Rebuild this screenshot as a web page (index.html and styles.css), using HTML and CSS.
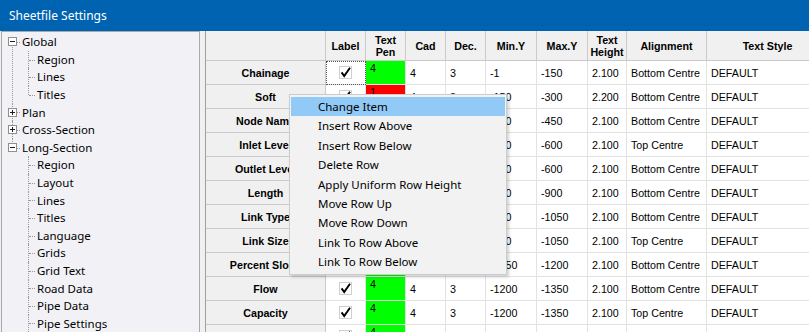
FILE: index.html
```html
<!DOCTYPE html>
<html lang="en">
<head>
    <meta charset="UTF-8">
    <title>Sheetfile Settings</title>
    <link rel="stylesheet" href="styles.css">
</head>
<body>
    <div class="titlebar">Sheetfile Settings</div>
    <div class="window-body">
        <div class="tree-pane">
            <ul class="tree">
                <li class="root first">
                    <div class="node"><svg class="box" width="9" height="9"><rect x=".5" y=".5" width="8" height="8" fill="#fff" stroke="#8e8f8f"/><path d="M2 4.5h5" stroke="#1c1c1c"/></svg>Global</div>
                    <ul class="kids">
                        <li><div class="node">Region</div></li>
                        <li><div class="node">Lines</div></li>
                        <li class="last"><div class="node">Titles</div></li>
                    </ul>
                </li>
                <li class="root">
                    <div class="node"><svg class="box" width="9" height="9"><rect x=".5" y=".5" width="8" height="8" fill="#fff" stroke="#8e8f8f"/><path d="M2 4.5h5M4.5 2v5" stroke="#1c1c1c"/></svg>Plan</div>
                </li>
                <li class="root">
                    <div class="node"><svg class="box" width="9" height="9"><rect x=".5" y=".5" width="8" height="8" fill="#fff" stroke="#8e8f8f"/><path d="M2 4.5h5M4.5 2v5" stroke="#1c1c1c"/></svg>Cross-Section</div>
                </li>
                <li class="root last">
                    <div class="node"><svg class="box" width="9" height="9"><rect x=".5" y=".5" width="8" height="8" fill="#fff" stroke="#8e8f8f"/><path d="M2 4.5h5" stroke="#1c1c1c"/></svg>Long-Section</div>
                    <ul class="kids">
                        <li><div class="node">Region</div></li>
                        <li><div class="node">Layout</div></li>
                        <li><div class="node">Lines</div></li>
                        <li><div class="node">Titles</div></li>
                        <li><div class="node">Language</div></li>
                        <li><div class="node">Grids</div></li>
                        <li><div class="node">Grid Text</div></li>
                        <li><div class="node">Road Data</div></li>
                        <li><div class="node">Pipe Data</div></li>
                        <li><div class="node">Pipe Settings</div></li>
                    </ul>
                </li>
            </ul>
        </div>

        <div class="sheet-wrap">
            <div class="sheet" id="sheet">
                <div class="hd"></div>
                <div class="hd">Label</div>
                <div class="hd">Text<br>Pen</div>
                <div class="hd">Cad</div>
                <div class="hd">Dec.</div>
                <div class="hd">Min.Y</div>
                <div class="hd">Max.Y</div>
                <div class="hd">Text<br>Height</div>
                <div class="hd">Alignment</div>
                <div class="hd">Text Style</div>
            </div>
        </div>

        <div class="menu">
            <div class="item active">Change Item</div>
            <div class="item">Insert Row Above</div>
            <div class="item">Insert Row Below</div>
            <div class="item">Delete Row</div>
            <div class="item">Apply Uniform Row Height</div>
            <div class="item">Move Row Up</div>
            <div class="item">Move Row Down</div>
            <div class="item">Link To Row Above</div>
            <div class="item">Link To Row Below</div>
        </div>
    </div>

    <script>
        // name, pen colour, pen, cad, dec, min, max, height, alignment
        const lignes = [
            ['Chainage', 'green', 4, 4, 3, '-1', '-150', '2.100', 'Bottom Centre'],
            ['Soft', 'red', 1, 4, 3, '-150', '-300', '2.200', 'Bottom Centre'],
            ['Node Name', 'green', 4, 4, 3, '-300', '-450', '2.100', 'Bottom Centre'],
            ['Inlet Level', 'green', 4, 4, 3, '-450', '-600', '2.100', 'Top Centre'],
            ['Outlet Level', 'green', 4, 4, 3, '-450', '-600', '2.100', 'Bottom Centre'],
            ['Length', 'green', 4, 4, 3, '-750', '-900', '2.100', 'Bottom Centre'],
            ['Link Type', 'green', 4, 4, 3, '-900', '-1050', '2.100', 'Bottom Centre'],
            ['Link Size', 'green', 4, 4, 3, '-900', '-1050', '2.100', 'Top Centre'],
            ['Percent Slope', 'green', 4, 4, 3, '-1050', '-1200', '2.100', 'Bottom Centre'],
            ['Flow', 'green', 4, 4, 3, '-1200', '-1350', '2.100', 'Bottom Centre'],
            ['Capacity', 'green', 4, 4, 3, '-1200', '-1350', '2.100', 'Top Centre'],
            ['Cover', 'green', 4, 4, 3, '-1350', '-1500', '2.100', 'Bottom Centre']
        ];

        const checkbox = '<svg width="13" height="13"><rect x=".5" y=".5" width="12" height="12" fill="#fff" stroke="#cfcfcf"/>' +
            '<path d="M2.6 6.4 5.2 10 11 1.8" fill="none" stroke="#000" stroke-width="1.9"/></svg>';

        const sheet = document.getElementById('sheet');
        lignes.forEach((l, i) => {
            let cells = `<div class="hd">${l[0]}</div>`;
            cells += `<div class="check${i === 0 ? ' focus' : ''}">${checkbox}</div>`;
            cells += `<div class="pen ${l[1]}">${l[2]}</div>`;
            l.slice(3).forEach(v => { cells += `<div>${v}</div>`; });
            cells += '<div>DEFAULT</div>';
            sheet.insertAdjacentHTML('beforeend', cells);
        });
    </script>
</body>
</html>
```

FILE: styles.css
```css
body {
    margin: 0;
    width: 809px;
    height: 332px;
    overflow: hidden;
    background-color: #f0f0f0;
    font-family: "Noto Sans", sans-serif;
}
.titlebar {
    height: 31px;
    box-sizing: border-box;
    padding: 1px 0 0 9px;
    background-color: #0063b1;
    color: #fff;
    font-size: 12px;
    line-height: 30px;
}
.window-body {
    position: relative;
    display: flex;
    height: 301px;
}

/* tree */
.tree-pane {
    width: 199px;
    margin-left: 1px;
    box-sizing: border-box;
    border: 1px solid #a9a9a9;
    border-bottom: none;
    background-color: #f2f2f6;
    font-size: 11.5px;
    color: #000;
}
.tree, .tree ul {
    list-style: none;
    margin: 0;
    padding: 0;
}
.tree {
    padding-top: 1.2px;
}
.root {
    position: relative;
    padding-left: 20px;
}
.root::before {
    content: '';
    position: absolute;
    left: 10px;
    top: 0;
    bottom: 0;
    border-left: 1px dotted #9a9a9a;
}
.root.first::before {
    top: 8.8px;
}
.root.last::before {
    bottom: auto;
    height: 8.8px;
}
.node {
    position: relative;
    height: 17.6px;
    line-height: 17.6px;
    white-space: nowrap;
}
.box {
    position: absolute;
    left: -14px;
    top: 4.3px;
    z-index: 1;
    display: block;
}
.root > .node::before {
    content: '';
    position: absolute;
    left: -5px;
    width: 3px;
    top: 8.8px;
    border-top: 1px dotted #9a9a9a;
}
.kids {
    padding-left: 15px !important;
}
.kids li {
    position: relative;
}
.kids li::before {
    content: '';
    position: absolute;
    left: -9px;
    top: 0;
    bottom: 0;
    border-left: 1px dotted #9a9a9a;
}
.kids li.last::before {
    bottom: auto;
    height: 8.8px;
}
.kids .node::before {
    content: '';
    position: absolute;
    left: -8px;
    width: 6px;
    top: 8.8px;
    border-top: 1px dotted #9a9a9a;
}

/* grid */
.sheet-wrap {
    flex: 1;
    margin-left: 5px;
    border-left: 1px solid #a0a0a0;
    overflow: hidden;
}
.sheet {
    display: grid;
    grid-template-columns: 120px 40px 40px 40px 40px 51px 51px 39px 80px 122px;
    grid-template-rows: 30px;
    grid-auto-rows: 24px;
    font-family: "Liberation Sans", Arial, sans-serif;
    font-size: 10.7px;
    color: #000;
}
.sheet > div {
    display: flex;
    align-items: center;
    box-sizing: border-box;
    padding-left: 4px;
    border-right: 1px solid #e2e2e2;
    border-bottom: 1px solid #e2e2e2;
    background-color: #fff;
    white-space: nowrap;
    overflow: hidden;
}
.sheet > .hd {
    justify-content: center;
    padding: 0;
    background-color: #f0f0f0;
    border-color: #cacaca;
    font-weight: bold;
    text-align: center;
    line-height: 12px;
}
.sheet > .check {
    justify-content: center;
    padding: 0;
}
.check svg {
    display: block;
}
.check.focus {
    outline: 1px dotted #555;
    outline-offset: -1px;
}
.sheet > .pen {
    align-items: flex-start;
    padding-top: 1px;
    line-height: 12px;
}
.pen.green {
    background-color: #00ff00;
}
.pen.red {
    background-color: #ff0000;
}

/* context menu */
.menu {
    position: absolute;
    left: 289px;
    top: 63px;
    width: 218px;
    box-sizing: border-box;
    padding: 2px 1px 2px 1px;
    background-color: #f2f2f2;
    border: 1px solid #cccccc;
    box-shadow: 2px 2px 3px rgba(0, 0, 0, 0.18);
    font-size: 11.5px;
    color: #000;
}
.item {
    height: 19.4px;
    line-height: 19.4px;
    padding-left: 27px;
}
.item.active {
    background-color: #91c9f7;
}
```
